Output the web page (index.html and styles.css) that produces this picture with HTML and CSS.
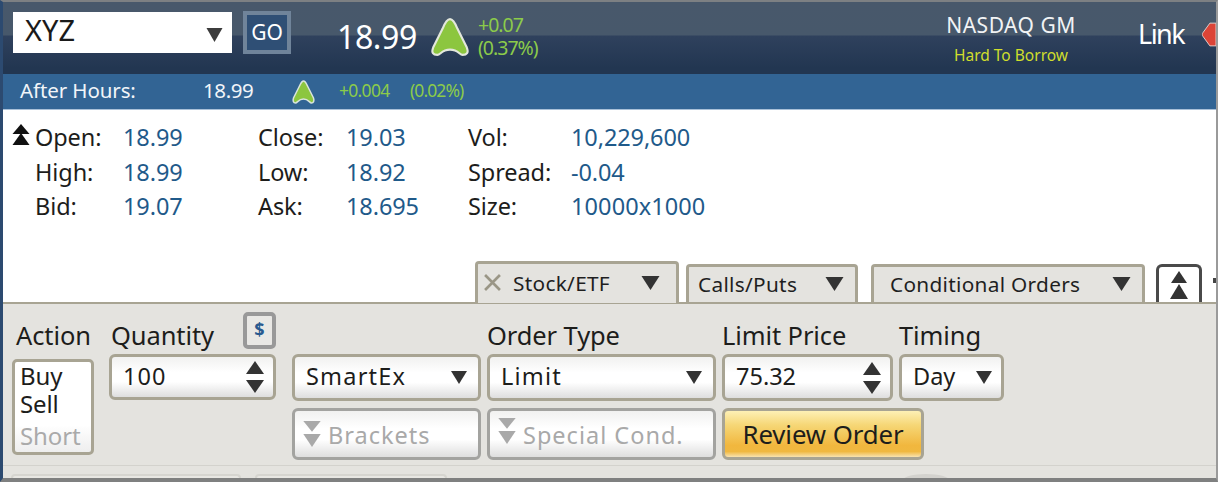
FILE: index.html
```html
<!DOCTYPE html>
<html lang="en">
<head>
<meta charset="utf-8">
<title>XYZ order ticket</title>
<link rel="stylesheet" href="styles.css">
</head>
<body>
<div class="app">
  <header class="hdr">
    <div class="symbol"><span>XYZ</span><svg class="caret" viewBox="0 0 16 14"><path d="M0 0H16L8 14Z"/></svg></div>
    <div class="go"><span>GO</span></div>
    <div class="last">18.99</div>
    <svg class="up-big" viewBox="0 0 38 38"><path d="M19 2C22 2 24 6 26 11L35 29C37 34 35 36 31 36C28 36 27 31 19 31C11 31 10 36 7 36C3 36 1 34 3 29L12 11C14 6 16 2 19 2Z"/></svg>
    <div class="chg"><div>+0.07</div><div>(0.37%)</div></div>
    <div class="exch"><div class="exch-name">NASDAQ GM</div><div class="htb">Hard To Borrow</div></div>
    <div class="link">Link</div>
    <svg class="link-mark" viewBox="0 0 16 26"><path d="M16 0H9L1 11C0 12 0 14 1 15L9 26H16Z"/></svg>
  </header>
  <div class="ah">
    <span class="ah-label">After Hours:</span>
    <span class="ah-last">18.99</span>
    <svg class="up-small" viewBox="0 0 24 24"><path d="M12 1C14 1 15 4 16 6L22 18C23 21 22 23 20 23C18 23 17 19 12 19C7 19 6 23 4 23C2 23 1 21 2 18L8 6C9 4 10 1 12 1Z"/></svg>
    <span class="ah-chg">+0.004</span>
    <span class="ah-pct">(0.02%)</span>
  </div>
  <section class="quote">
    <svg class="collapse" viewBox="0 0 17 22"><path d="M8.500 0L17 10H0Z"/><path d="M8.500 9L17 21H0Z"/></svg>
    <dl class="q-col q1">
      <dt>Open:</dt><dd>18.99</dd>
      <dt>High:</dt><dd>18.99</dd>
      <dt>Bid:</dt><dd>19.07</dd>
    </dl>
    <dl class="q-col q2">
      <dt>Close:</dt><dd>19.03</dd>
      <dt>Low:</dt><dd>18.92</dd>
      <dt>Ask:</dt><dd>18.695</dd>
    </dl>
    <dl class="q-col q3">
      <dt>Vol:</dt><dd>10,229,600</dd>
      <dt>Spread:</dt><dd>-0.04</dd>
      <dt>Size:</dt><dd>10000x1000</dd>
    </dl>
  </section>
  <nav class="tabs">
    <div class="tab tab-active">
      <svg class="tab-x" viewBox="0 0 16 16"><path d="M1 1L15 15M15 1L1 15"/></svg>
      <span>Stock/ETF</span>
      <svg class="caret" viewBox="0 0 18 14"><path d="M0 0H18L9 14Z"/></svg>
    </div>
    <div class="tab tab-calls">
      <span>Calls/Puts</span>
      <svg class="caret" viewBox="0 0 18 14"><path d="M0 0H18L9 14Z"/></svg>
    </div>
    <div class="tab tab-cond">
      <span>Conditional Orders</span>
      <svg class="caret" viewBox="0 0 18 14"><path d="M0 0H18L9 14Z"/></svg>
    </div>
    <div class="tab-toggle"><svg viewBox="0 0 18 28"><path d="M9 0L17 12H1Z"/><path d="M9 13L18 28H0Z"/></svg></div>
    <div class="tab-tick"></div>
  </nav>
  <section class="form">
    <div class="label l-action">Action</div>
    <div class="label l-qty">Quantity<span class="dollar">$</span></div>
    <div class="label l-type">Order Type</div>
    <div class="label l-limit">Limit Price</div>
    <div class="label l-timing">Timing</div>

    <div class="actions">
      <div>Buy</div><div>Sell</div><div class="muted">Short</div>
    </div>
    <div class="field f-qty"><span>100</span><svg class="spin" viewBox="0 0 18 32"><path d="M9 0L18 13H0Z"/><path d="M0 19H18L9 32Z"/></svg></div>
    <div class="field f-route"><span>SmartEx</span><svg class="caret-f" viewBox="0 0 16 13"><path d="M0 0H16L8 13Z"/></svg></div>
    <div class="field f-type"><span>Limit</span><svg class="caret-f" viewBox="0 0 16 13"><path d="M0 0H16L8 13Z"/></svg></div>
    <div class="field f-limit"><span>75.32</span><svg class="spin" viewBox="0 0 18 32"><path d="M9 0L18 13H0Z"/><path d="M0 19H18L9 32Z"/></svg></div>
    <div class="field f-timing"><span>Day</span><svg class="caret-f" viewBox="0 0 16 13"><path d="M0 0H16L8 13Z"/></svg></div>

    <div class="field disabled f-brackets"><svg class="dbl" viewBox="0 0 16 24"><path d="M0 0H16L8 10H8Z"/><path d="M0 12H16L8 24Z"/></svg><span>Brackets</span></div>
    <div class="field disabled f-special"><svg class="dbl dbl-high" viewBox="0 0 16 24"><path d="M0 0H16L8 10H8Z"/><path d="M0 12H16L8 24Z"/></svg><span>Special Cond.</span></div>
    <div class="review">Review Order</div>
  </section>
  <footer class="foot">
    <div class="stub s1"></div>
    <div class="stub s2"></div>
    <div class="stub s3"></div>
  </footer>
</div>
</body>
</html>
```
FILE: styles.css
```css
* { box-sizing: border-box; }
html, body { margin: 0; padding: 0; background: #fff; }
body { width: 1218px; height: 482px; overflow: hidden; font-family: "Noto Sans", "Open Sans", sans-serif; color: #1d1d1b; }
.app { position: relative; width: 1218px; height: 482px; display: flex; flex-direction: column; border-top: 2px solid #7d8083; border-left: 3px solid #2c4a70; border-right: 2px solid #9a9a9a; border-bottom: 4px solid #7f8080; overflow: hidden; }

.hdr { height: 72px; flex: none; display: flex; align-items: center; position: relative; overflow: hidden; background: linear-gradient(#48586b 0, #47586b 33px, #2f415d 34px, #223651 66px, #223651 100%); }
.symbol { margin-left: 10px; width: 219px; height: 41px; margin-top: -12px; background: #fff; display: flex; align-items: center; justify-content: space-between; padding: 0 9px 0 12px; font-size: 29px; color: #1a1a1a; }
.symbol span { margin-top: -5px; }
.symbol .caret { width: 17px; height: 14px; margin-top: 6px; fill: #3c3c3c; }
.go { margin-left: 11px; width: 48px; height: 43px; margin-top: -12px; background: #2f4f75; border: 4px solid #70849a; display: flex; align-items: center; justify-content: center; color: #fff; font-size: 21px; }
.last { margin-left: 46px; width: 81px; margin-top: -4px; font-size: 32px; letter-spacing: -.4px; color: #fff; white-space: nowrap; }
.up-big { margin-left: 12px; margin-top: -2px; width: 40px; height: 40px; fill: #8cc63f; stroke: #e3e7dc; stroke-width: 2; }
.chg { margin-left: 8px; margin-top: -4px; font-size: 19.500px; line-height: 23px; letter-spacing: -1px; color: #8ccb4a; }
.exch { position: absolute; left: 941px; top: 10px; width: 134px; text-align: center; }
.exch-name { color: #f1f3f5; font-size: 21px; line-height: 26px; letter-spacing: .5px; white-space: nowrap; }
.htb { color: #d0de2c; font-size: 15.500px; line-height: 24px; margin-top: 5px; white-space: nowrap; }
.link { position: absolute; left: 1135px; top: 12px; font-size: 27px; line-height: 40px; color: #fff; letter-spacing: -1.500px; }
.link-mark { position: absolute; left: 1199px; top: 19px; width: 14px; height: 27px; fill: #dc4437; stroke: #e9dcd8; stroke-width: 1; }

.ah { height: 36px; flex: none; display: flex; align-items: center; padding-bottom: 3px; background: #326494; border-bottom: 1px solid #a9c0d8; color: #f1f5f9; font-size: 20.500px; }
.ah-label { margin-left: 17px; width: 183px; letter-spacing: -.1px; }
.ah-last { width: 88px; letter-spacing: -.4px; }
.up-small { width: 25px; height: 24px; fill: #8cc63f; stroke: #d9e4dc; stroke-width: 1.500; margin-top: 3px; }
.ah-chg { margin-left: 23px; width: 71px; color: #8ccb4a; font-size: 17.500px; letter-spacing: -.7px; }
.ah-pct { color: #8ccb4a; font-size: 17.500px; letter-spacing: -.9px; }

.quote { height: 132px; flex: none; display: flex; position: relative; background: #fff; padding-top: 10px; }
.collapse { position: absolute; left: 9px; top: 14px; width: 18px; height: 22px; fill: #111; }
.q-col { margin: 0; display: grid; grid-auto-rows: 34.500px; font-size: 23.500px; align-items: center; }
.q-col dt { margin: 0; color: #1d1d1b; letter-spacing: -.1px; }
.q-col dd { margin: 0; color: #1f5a8a; letter-spacing: -.1px; white-space: nowrap; }
.q1 { margin-left: 32px; grid-template-columns: 88px auto; width: 223px; }
.q2 { grid-template-columns: 88px auto; width: 210px; }
.q3 { grid-template-columns: 103px auto; }
.q3 dd:last-child { letter-spacing: .1px; }

.tabs { height: 60px; flex: none; display: flex; align-items: flex-end; padding-left: 472px; background: #fff; position: relative; z-index: 1; }
.tab { position: relative; display: flex; align-items: center; background: #e4e3df; border: 3px solid #a8a493; border-bottom: 0; border-radius: 4px 4px 0 0; font-size: 20.800px; color: #1f1f1f; letter-spacing: .3px; padding-bottom: 2px; }
.tab .caret { width: 19px; height: 14px; fill: #333; flex: none; }
.tab-active { width: 204px; height: 42px; padding: 0 16px 2px 6px; margin-bottom: -1px; z-index: 2; }
.tab-x { width: 17px; height: 17px; flex: none; fill: none; stroke: #9a9686; stroke-width: 2.500; }
.tab-active span { margin-left: 12px; width: 137px; }
.tab-calls { margin-left: 7px; width: 172px; height: 38px; padding: 0 11px 2px 9px; justify-content: space-between; }
.tab-cond { margin-left: 13px; width: 274px; height: 38px; padding: 0 11px 2px 16px; justify-content: space-between; }
.tab-toggle { margin-left: 11px; width: 46px; height: 38px; background: #fff; border: 3px solid #4a4a4a; border-bottom: 0; border-radius: 6px 6px 0 0; display: flex; justify-content: center; align-items: center; }
.tab-toggle svg { width: 18px; height: 28px; fill: #333; }
.tab-tick { margin-left: 11px; align-self: flex-end; width: 3px; height: 5px; margin-bottom: 19px; background: #444; }

.form { flex: 1; background: #e4e3df; border-top: 3px solid #a8a493; display: grid; grid-template-columns: 91px 177px 189px 229px 171px 105px; grid-template-rows: 31px 47px 52px; column-gap: 6px; row-gap: 7px; padding: 12px 0 0 9px; align-content: start; position: relative; margin-top: -1px; }
.label { font-size: 25.500px; line-height: 38px; color: #1d1d1b; white-space: nowrap; letter-spacing: -.1px; }
.l-action { grid-column: 1; grid-row: 1; padding-left: 4px; }
.l-qty { grid-column: 2; grid-row: 1; padding-left: 2px; position: relative; }
.l-type { grid-column: 4; grid-row: 1; }
.l-limit { grid-column: 5; grid-row: 1; }
.l-timing { grid-column: 6; grid-row: 1; }
.dollar { position: absolute; left: 134px; top: -4px; width: 33px; height: 37px; background: #e9e8e5; border: 4px solid #999; border-radius: 5px; color: #2a5a8f; font-size: 18px; font-weight: 700; line-height: 27px; text-align: center; letter-spacing: 0; }

.actions { grid-column: 1; grid-row: 2 / 4; width: 82px; height: 96px; margin-top: 5px; border: 3px solid #a8a493; border-radius: 5px; background: linear-gradient(#fff 70%, #eee); padding: 0 0 0 5px; font-size: 24px; line-height: 28px; color: #1d1d1b; letter-spacing: -.1px; }
.actions .muted { color: #aaa; margin-top: 4px; }

.field { height: 47px; display: flex; align-items: center; justify-content: space-between; border: 3px solid #a8a493; border-radius: 6px; background: linear-gradient(#f1f1f0 0, #fff 38%, #fff 62%, #dedede 100%); font-size: 23.500px; color: #1d1d1b; padding: 0 9px 0 11px; }
.spin { width: 18px; height: 32px; fill: #333; flex: none; }
.caret-f { width: 16px; height: 13px; fill: #333; flex: none; }
.field span { margin-top: -3px; letter-spacing: 1.200px; }
.f-qty { grid-column: 2; grid-row: 2; width: 167px; height: 46px; }
.f-route { grid-column: 3; grid-row: 2; padding-right: 11px; }
.f-type { grid-column: 4; grid-row: 2; padding-right: 11px; }
.f-limit { grid-column: 5; grid-row: 2; }
.f-timing { grid-column: 6; grid-row: 2; padding-right: 9px; }
.f-limit span, .f-timing span { letter-spacing: 0; }
.f-qty span { letter-spacing: 1px; }
.disabled { height: 52px; border-color: #a3a3a0; color: #a9a9a9; justify-content: flex-start; padding-left: 8px; }
.dbl { width: 18px; height: 26px; fill: #a9a9a9; flex: none; }
.dbl-high { margin-top: -6px; }
.f-brackets { grid-column: 3; grid-row: 3; }
.f-special { grid-column: 4; grid-row: 3; }
.disabled span { margin-left: 7px; margin-top: 1px; letter-spacing: 1px; }
.review { grid-column: 5 / 7; grid-row: 3; width: 202px; height: 52px; border: 3px solid #a8a493; border-radius: 6px; background: linear-gradient(#fdf0b5 0, #f6d777 30%, #f1b73e 75%, #f0b840 88%, #f8e3b0 100%); font-size: 25.800px; display: flex; align-items: center; justify-content: center; color: #1d1d1b; letter-spacing: -.1px; }

.foot { position: absolute; left: 0; right: 0; bottom: 0; height: 13px; border-top: 1px solid #d3d2cd; background: #e4e3df; z-index: 1; }
.stub { position: absolute; top: 8px; height: 12px; background: #e8e7e3; border: 2px solid #d6d5d0; border-bottom: 0; border-radius: 4px 4px 0 0; }
.s1 { left: 8px; width: 230px; }
.s2 { left: 252px; width: 192px; }
.s3 { left: 900px; width: 46px; top: 8px; border: 0; border-radius: 50% 50% 0 0; background: #d3d2ce; }
```
